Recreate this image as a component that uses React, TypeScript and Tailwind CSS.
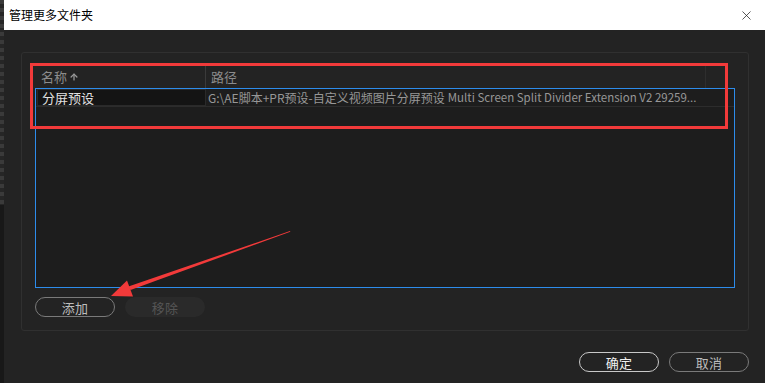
import { ArrowUp, X } from 'lucide-react';

const font = { fontFamily: '"Noto Sans CJK SC", "Noto Sans", sans-serif' };

function Pill({ label, variant }: { label: string; variant: 'normal' | 'primary' | 'disabled' }) {
    const cls =
        variant === 'primary'
            ? 'border-[#c8c8c8] text-[#f0f0f0]'
            : variant === 'disabled'
            ? 'border-transparent bg-[#2a2a2a] text-[#555]'
            : 'border-[#7a7a7a] text-[#bdbdbd]';
    return (
        <div className={`w-[80px] h-[20px] rounded-full border-[1.5px] flex items-center justify-center text-[13px] leading-none tracking-wide ${cls}`}>
            {label}
        </div>
    );
}

export default function App() {
    return (
        <div className="relative w-[765px] h-[383px] flex overflow-hidden bg-[#232323]" style={font}>
            {/* background strip behind the dialog */}
            <div className="w-[4px] h-full flex flex-col">
                <div className="h-[205px] bg-[repeating-linear-gradient(180deg,#3a3a3a_0px,#3a3a3a_4px,#262626_4px,#262626_8px)]" />
                <div className="flex-1 bg-[#181818]" />
            </div>

            <div className="flex-1 flex flex-col">
                {/* title bar */}
                <div className="h-[30px] bg-white flex items-center justify-between pl-[5px] pr-[11px]">
                    <span className="text-[12px] text-black">管理更多文件夹</span>
                    <X className="w-[15px] h-[15px] text-[#222]" strokeWidth={1.2} />
                </div>

                {/* body */}
                <div className="flex-1 flex flex-col pl-[17px] pr-[16px] pt-[22px]">
                    <div className="h-[279px] border border-[#303030] rounded-[3px] pl-[13px] pr-[13px] pt-[13px] flex flex-col">
                        {/* header */}
                        <div className="h-[22px] flex text-[13px] text-[#8c8c8c]">
                            <div className="w-[171px] flex items-center pl-[6px] gap-[2px] border-r border-[#3a3a3a]">
                                名称
                                <ArrowUp className="w-[10px] h-[10px] text-[#9a9a9a]" strokeWidth={3} />
                            </div>
                            <div className="w-[500px] flex items-center pl-[5px] border-r border-[#2e2e2e]">路径</div>
                        </div>

                        {/* list */}
                        <div className="h-[200px] border border-[#2d8ceb] bg-[#1d1d1d] flex flex-col">
                            <div className="h-[18px] flex border-b border-[#2c2c2c]">
                                <div className="w-[169px] ml-[1px] bg-[#141414] border border-[#2a2a2a] flex items-center pl-[4px] text-[13px] text-[#e0e0e0]">
                                    分屏预设
                                </div>
                                <div className="flex-1 flex items-center pl-[2px] text-[12px] text-[#979797] whitespace-nowrap overflow-hidden">
                                    G:\AE脚本+PR预设-自定义视频图片分屏预设
                                    <span className="text-[11.5px] ml-[3px]">Multi Screen Split Divider Extension V2 29259...</span>
                                </div>
                            </div>
                        </div>

                        {/* add / remove */}
                        <div className="flex gap-[10px] mt-[9px]">
                            <Pill label="添加" variant="normal" />
                            <Pill label="移除" variant="disabled" />
                        </div>
                    </div>

                    <div className="flex justify-end gap-[10px] mt-[21px]">
                        <Pill label="确定" variant="primary" />
                        <Pill label="取消" variant="normal" />
                    </div>
                </div>
            </div>

            {/* annotation: red rectangle */}
            <div className="absolute left-[30px] top-[63px] w-[698px] h-[66px] border-[3px] border-[#f23a3a]" />

            {/* annotation: red arrow */}
            <svg className="absolute left-0 top-0" width="765" height="383" viewBox="0 0 765 383">
                <polygon points="290,231 290.3,231.8 130.5,290 128.4,286.6" fill="#f23a3a" />
                <polygon points="111,296 127,280.5 133,296.5" fill="#f23a3a" />
            </svg>
        </div>
    );
}
